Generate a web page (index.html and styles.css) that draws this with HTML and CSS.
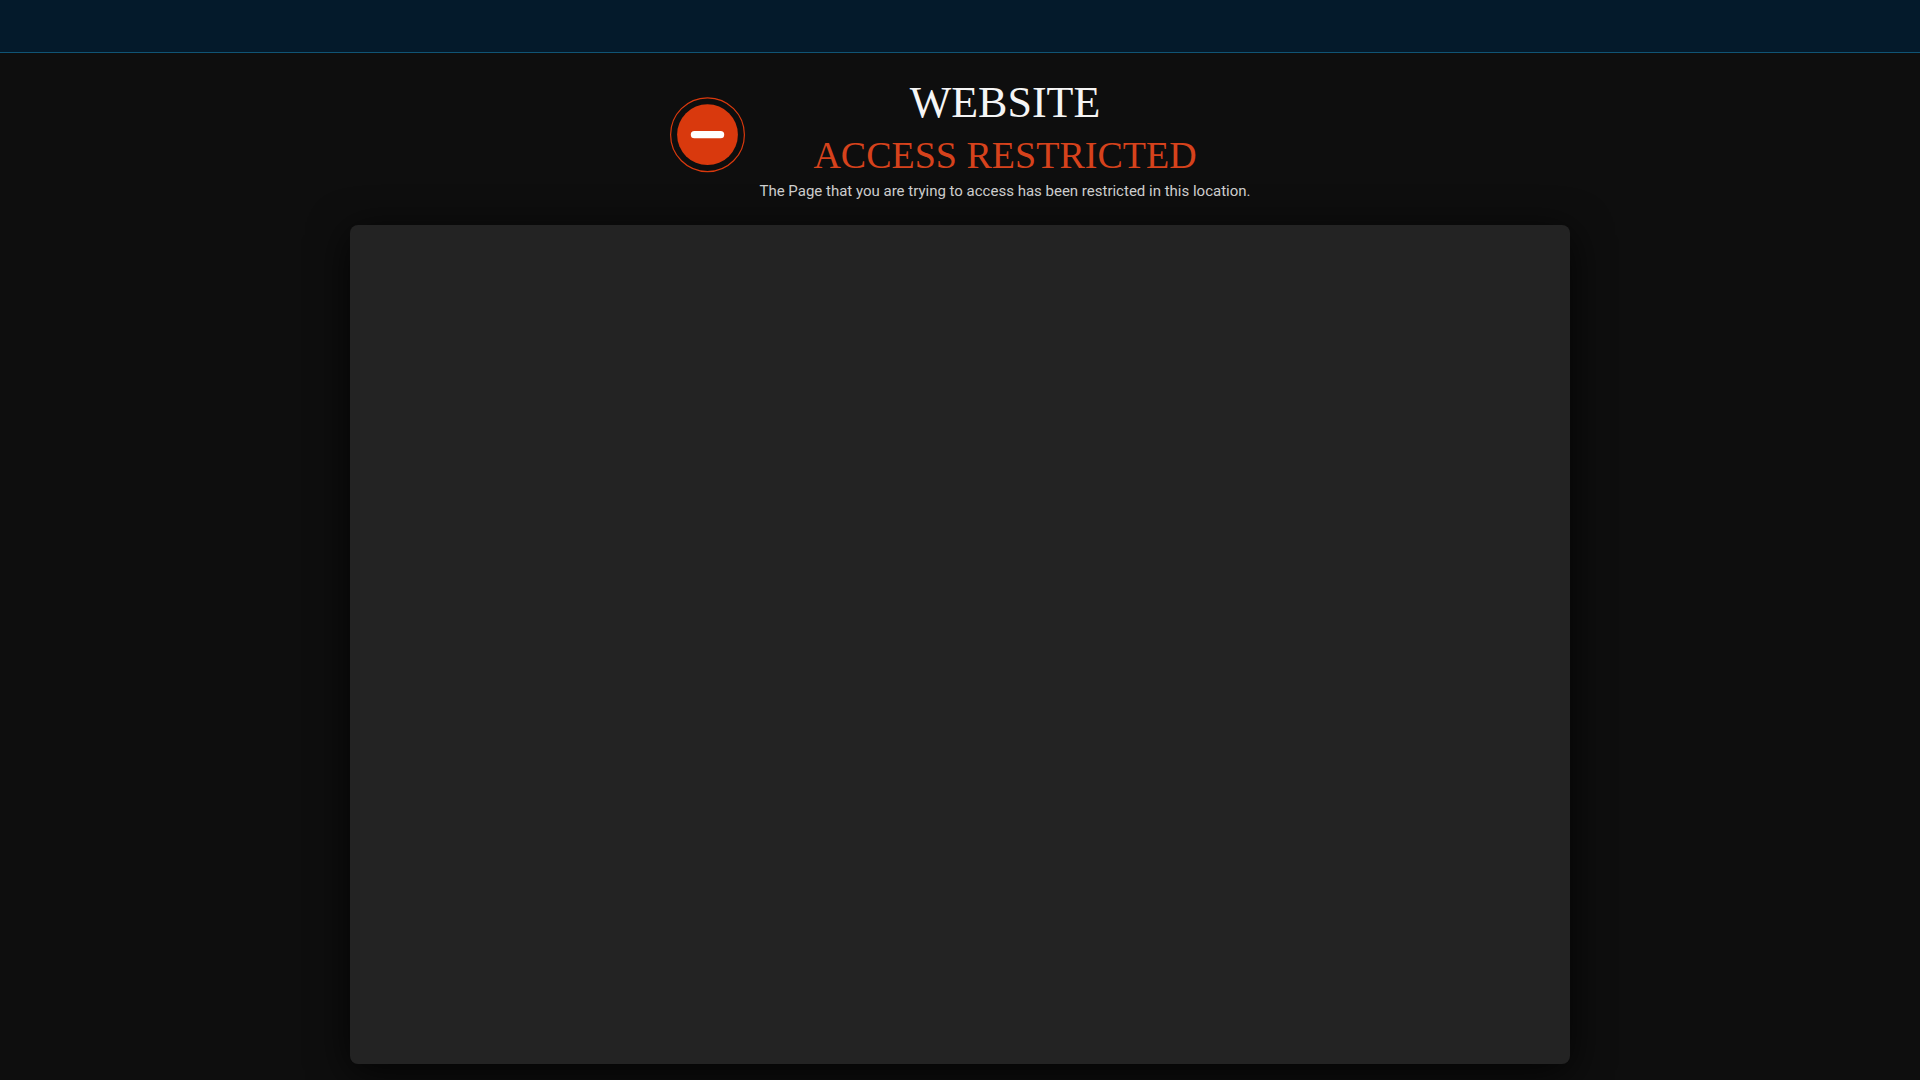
FILE: index.html
```html
<!DOCTYPE html>
<html lang="en">
<head>
<meta charset="utf-8">
<meta name="viewport" content="width=device-width, initial-scale=1">
<title>Access Restricted</title>
<link rel="stylesheet" href="styles.css">
</head>
<body>
<header class="topbar"></header>
<main class="content">
  <section class="notice">
    <svg class="notice-icon" viewBox="0 0 76 76" aria-hidden="true">
      <circle cx="38.5" cy="37.7" r="36.9" fill="none" stroke="#d9390d" stroke-width="1.2"/>
      <circle cx="38.5" cy="37.7" r="30.4" fill="#d9390d"/>
      <rect x="21.8" y="34.1" width="33.4" height="7.2" rx="3.6" fill="#fff"/>
    </svg>
    <div class="notice-text">
      <h1 class="title">WEBSITE</h1>
      <h2 class="subtitle">ACCESS RESTRICTED</h2>
      <p class="message">The Page that you are trying to access has been restricted in this location.</p>
    </div>
  </section>
  <section class="panel"></section>
</main>
</body>
</html>
```
FILE: styles.css
```css
* { box-sizing: border-box; }
body {
  margin: 0;
  min-height: 100vh;
  display: flex;
  flex-direction: column;
  background: #0e0e0e;
  color: #f5f5f5;
  font-family: Roboto, sans-serif;
}
.topbar {
  height: 53px;
  background: #041a2b;
  border-bottom: 1px solid #105474;
}
.content {
  flex: 1;
  display: flex;
  flex-direction: column;
  align-items: center;
  gap: 24px;
  padding: 24px 16px 16px;
}
.notice {
  display: flex;
  align-items: flex-start;
  gap: 14px;
}
.notice-icon {
  width: 76px;
  height: 76px;
  margin-top: 20px;
}
.notice-text { text-align: center; }
.title, .subtitle {
  margin: 0;
  font-family: "Liberation Serif", serif;
  font-weight: 400;
}
.title { font-size: 44px; line-height: 52px; }
.subtitle { font-size: 38px; line-height: 52px; color: #d6421c; }
.message {
  margin: 0;
  font-size: 15px;
  line-height: 20px;
  color: #d0d0d0;
}
.panel {
  flex: 1;
  width: 100%;
  max-width: 1220px;
  border-radius: 8px;
  background: #232323;
  box-shadow: 0 8px 40px rgba(0, 0, 0, 0.8);
}
```
